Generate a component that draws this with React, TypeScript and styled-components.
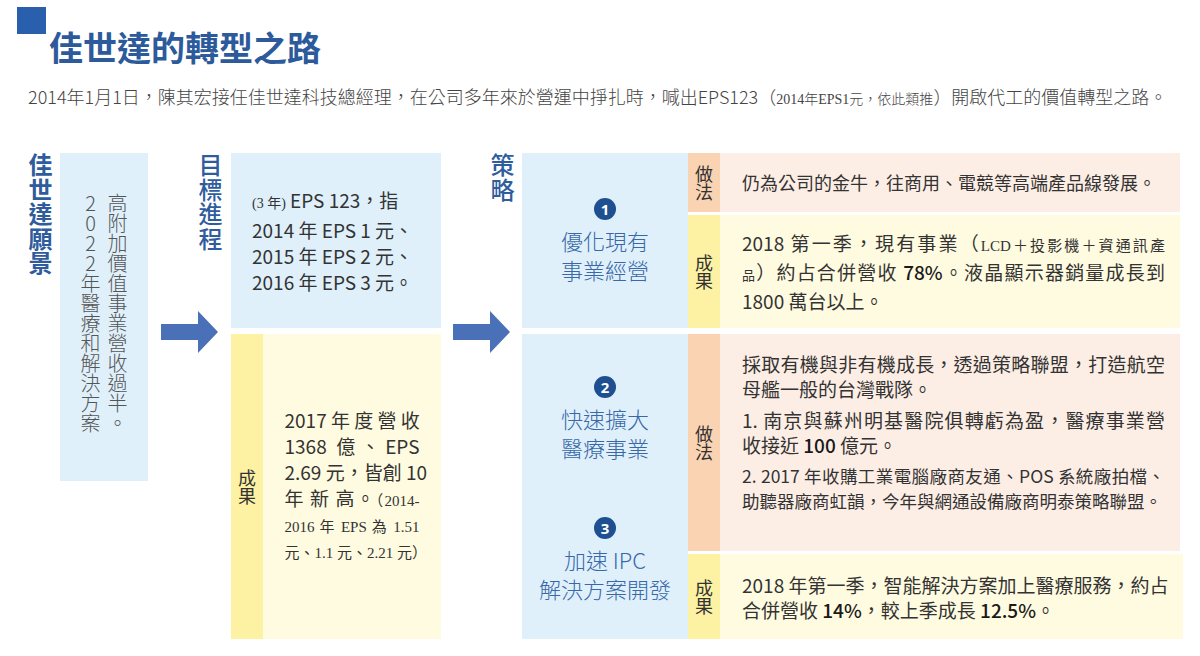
import React from 'react';
import styled, { createGlobalStyle } from 'styled-components';

const GlobalStyle = createGlobalStyle`
  html, body { margin: 0; padding: 0; background: #fff; }
  body { font-family: "Noto Sans CJK TC", "Noto Sans", sans-serif; color: #333; }
  * { box-sizing: border-box; }
`;

const C = {
  blueBox: '#dff0fb',
  peachStrip: '#fad3b3',
  peachBody: '#fdeee5',
  yellowStrip: '#fdf2a3',
  yellowBody: '#fffbe0',
  arrow: '#4a70b7',
  heading: '#2e5c9c',
  stratText: '#3868a8',
  dot: '#1d4f91',
};

const SERIF = `"Liberation Serif", "Noto Sans CJK TC", serif`;

const Page = styled.div`
  width: 1200px;
  height: 656px;
  overflow: hidden;
  background: #fff;
`;

const Header = styled.header`
  display: flex;
  align-items: flex-start;
  padding: 7px 0 0 17px;
`;

const Square = styled.div`
  flex: none;
  width: 29px;
  height: 27px;
  background: #2a5fae;
`;

const Title = styled.h1`
  margin: 20px 0 0 3px;
  font-size: 34px;
  line-height: 40px;
  font-weight: 700;
  color: #2c5a9b;
`;

const Subtitle = styled.p`
  margin: 16px 0 0 28px;
  font-size: 18px;
  line-height: 26px;
  font-weight: 300;
  color: #444;
  white-space: nowrap;
`;

const SmallSerif = styled.span<{ $size?: number }>`
  font-family: ${SERIF};
  font-size: ${(p) => p.$size ?? 13}px;
`;

const Main = styled.main`
  display: flex;
  margin-top: 40px;
  padding-left: 28px;
  width: 1180px;
  height: 486px;
`;

const VerticalHeading = styled.h2<{ $weight?: number }>`
  margin: 0;
  writing-mode: vertical-rl;
  font-size: 24px;
  line-height: 25px;
  font-weight: ${(p) => p.$weight ?? 500};
  color: ${C.heading};
  letter-spacing: 0.5px;
`;

const VisionHeading = styled(VerticalHeading)`
  margin-right: 7px;
  align-self: flex-start;
`;

const VisionBox = styled.div`
  width: 88px;
  height: 328px;
  background: ${C.blueBox};
  display: flex;
  justify-content: center;
  padding-top: 40px;
`;

const VisionText = styled.p`
  margin: 0;
  writing-mode: vertical-lr;
  text-orientation: upright;
  font-size: 20px;
  line-height: 27px;
  font-weight: 300;
  color: #555;
`;

const Gutter = styled.div<{ $width: number; $titleGap: number }>`
  flex: none;
  width: ${(p) => p.$width}px;
  display: grid;
  grid-template-rows: 158px 42px;
  & > h2 {
    justify-self: end;
    align-self: start;
    margin-right: ${(p) => p.$titleGap}px;
  }
`;

const ArrowIcon = styled.svg`
  grid-row: 2;
  justify-self: center;
  display: block;
`;

const Arrow = () => (
  <ArrowIcon width="57" height="42" viewBox="0 0 57 42">
    <polygon points="0,13 37,13 37,0 57,21 37,42 37,29 0,29" fill={C.arrow} />
  </ArrowIcon>
);

const Column = styled.div<{ $width?: number }>`
  display: flex;
  flex-direction: column;
  gap: 6px;
  ${(p) => (p.$width ? `width: ${p.$width}px; flex: none;` : 'flex: 1; min-width: 0;')}
`;

const GoalBox = styled.div`
  height: 175px;
  background: ${C.blueBox};
  display: flex;
  align-items: center;
  padding-left: 21px;
`;

const GoalText = styled.p`
  margin: 0;
  font-size: 19px;
  line-height: 26px;
  color: #333;
`;

const Panel = styled.div<{ $bg: string; $height?: number }>`
  display: flex;
  background: ${(p) => p.$bg};
  ${(p) => (p.$height ? `height: ${p.$height}px; flex: none;` : 'flex: 1;')}
`;

const Strip = styled.div<{ $bg: string }>`
  flex: none;
  width: 32px;
  background: ${(p) => p.$bg};
  display: flex;
  align-items: center;
  justify-content: center;
`;

const StripLabel = styled.span`
  writing-mode: vertical-rl;
  font-size: 18px;
  line-height: 18px;
  color: #333;
`;

const CenterBody = styled.div`
  flex: 1;
  display: flex;
  align-items: center;
  justify-content: center;
`;

const JustifyBlock = styled.div`
  width: 135px;
`;

const Line = styled.div<{ $justify?: boolean; $size?: number; $serif?: boolean }>`
  font-size: ${(p) => p.$size ?? 19}px;
  line-height: 25px;
  white-space: nowrap;
  ${(p) => (p.$serif ? `font-family: ${SERIF};` : '')}
  ${(p) =>
    p.$justify
      ? 'text-align: justify; text-align-last: justify;'
      : 'text-align: left;'}
`;

const ResultLine = styled(Line)`
  line-height: 26px;
`;

const StratRow = styled.div<{ $height?: number }>`
  display: flex;
  ${(p) => (p.$height ? `height: ${p.$height}px; flex: none;` : 'flex: 1;')}
`;

const StratCard = styled.div<{ $top?: number }>`
  flex: none;
  width: 166px;
  background: ${C.blueBox};
  display: flex;
  flex-direction: column;
  align-items: center;
  gap: 55px;
  ${(p) =>
    p.$top !== undefined
      ? `justify-content: flex-start; padding-top: ${p.$top}px;`
      : 'justify-content: center;'}
`;

const StratItem = styled.div`
  display: flex;
  flex-direction: column;
  align-items: center;
`;

const NumDot = styled.span`
  width: 22px;
  height: 22px;
  border-radius: 50%;
  background: ${C.dot};
  color: #fff;
  font-family: "Noto Sans", "Liberation Sans", sans-serif;
  font-weight: 700;
  font-size: 15px;
  line-height: 22px;
  text-align: center;
  margin-bottom: 6px;
`;

const StratName = styled.div`
  font-size: 22px;
  line-height: 29px;
  font-weight: 300;
  color: ${C.stratText};
  text-align: center;
  white-space: nowrap;
`;

const DetailStack = styled.div`
  flex: 1;
  min-width: 0;
  display: flex;
  flex-direction: column;
  gap: 3px;
`;

const DetailBody = styled.div<{ $bg: string; $padTop?: number }>`
  flex: 1;
  background: ${(p) => p.$bg};
  display: flex;
  flex-direction: column;
  gap: 6px;
  padding: 0 15px 0 22px;
  color: #333;
  ${(p) =>
    p.$padTop !== undefined
      ? `justify-content: flex-start; padding-top: ${p.$padTop}px;`
      : 'justify-content: center;'}
`;

const Para = styled.div``;

const Big = styled.span`
  color: #1a1a1a;
  font-weight: 500;
`;

const Detail = ({
  label,
  strip,
  body,
  height,
  padTop,
  children,
}: {
  label: string;
  strip: string;
  body: string;
  height?: number;
  padTop?: number;
  children: React.ReactNode;
}) => (
  <Panel $bg={body} $height={height}>
    <Strip $bg={strip}>
      <StripLabel>{label}</StripLabel>
    </Strip>
    <DetailBody $bg={body} $padTop={padTop}>
      {children}
    </DetailBody>
  </Panel>
);

export default function App() {
  return (
    <Page>
      <GlobalStyle />
      <Header>
        <Square />
        <Title>佳世達的轉型之路</Title>
      </Header>
      <Subtitle>
        2014年1月1日，陳其宏接任佳世達科技總經理，在公司多年來於營運中掙扎時，喊出EPS123（
        <SmallSerif $size={14}>2014年EPS1元，依此類推</SmallSerif>）開啟代工的價值轉型之路。
      </Subtitle>

      <Main>
        <VisionHeading $weight={700}>佳世達願景</VisionHeading>
        <VisionBox>
          <VisionText>
            2022年醫療和解決方案
            <br />
            高附加價值事業營收過半。
          </VisionText>
        </VisionBox>

        <Gutter $width={83} $titleGap={8}>
          <VerticalHeading>目標進程</VerticalHeading>
          <Arrow />
        </Gutter>

        <Column $width={210}>
          <GoalBox>
            <GoalText>
              <SmallSerif $size={14}>(3 年)</SmallSerif> EPS 123，指
              <br />
              2014 年 EPS 1 元、
              <br />
              2015 年 EPS 2 元、
              <br />
              2016 年 EPS 3 元。
            </GoalText>
          </GoalBox>
          <Panel $bg={C.yellowBody}>
            <Strip $bg={C.yellowStrip}>
              <StripLabel>成果</StripLabel>
            </Strip>
            <CenterBody>
              <JustifyBlock>
                <ResultLine $justify>2017 年 度 營 收</ResultLine>
                <ResultLine $justify>1368 億、EPS</ResultLine>
                <ResultLine $justify>2.69 元，皆創 10</ResultLine>
                <ResultLine $justify>
                  年 新 高。<SmallSerif $size={15}>（2014-</SmallSerif>
                </ResultLine>
                <ResultLine $justify $serif $size={15}>
                  2016 年 EPS 為 1.51
                </ResultLine>
                <ResultLine $justify $serif $size={15}>
                  元、1.1 元、2.21 元）
                </ResultLine>
              </JustifyBlock>
            </CenterBody>
          </Panel>
        </Column>

        <Gutter $width={81} $titleGap={7}>
          <VerticalHeading>策略</VerticalHeading>
          <Arrow />
        </Gutter>

        <Column>
          <StratRow $height={175}>
            <StratCard>
              <StratItem>
                <NumDot>1</NumDot>
                <StratName>
                  優化現有
                  <br />
                  事業經營
                </StratName>
              </StratItem>
            </StratCard>
            <DetailStack>
              <Detail label="做法" strip={C.peachStrip} body={C.peachBody} height={59}>
                <Line $size={18}>仍為公司的金牛，往商用、電競等高端產品線發展。</Line>
              </Detail>
              <Detail label="成果" strip={C.yellowStrip} body={C.yellowBody}>
                <Para>
                  <Line $justify>
                    2018 第一季，現有事業（<SmallSerif $size={15}>LCD＋投影機＋資通訊產</SmallSerif>
                  </Line>
                  <Line $justify>
                    <SmallSerif $size={13}>品</SmallSerif>）約占合併營收 <Big>78%</Big>。液晶顯示器銷量成長到
                  </Line>
                  <Line>1800 萬台以上。</Line>
                </Para>
              </Detail>
            </DetailStack>
          </StratRow>

          <StratRow>
            <StratCard $top={42}>
              <StratItem>
                <NumDot>2</NumDot>
                <StratName>
                  快速擴大
                  <br />
                  醫療事業
                </StratName>
              </StratItem>
              <StratItem>
                <NumDot>3</NumDot>
                <StratName>
                  加速 IPC
                  <br />
                  解決方案開發
                </StratName>
              </StratItem>
            </StratCard>
            <DetailStack>
              <Detail label="做法" strip={C.peachStrip} body={C.peachBody} height={217} padTop={17}>
                <Para>
                  <Line $justify>採取有機與非有機成長，透過策略聯盟，打造航空</Line>
                  <Line>母艦一般的台灣戰隊。</Line>
                </Para>
                <Para>
                  <Line $justify>1. 南京與蘇州明基醫院俱轉虧為盈，醫療事業營</Line>
                  <Line>
                    收接近 <Big>100</Big> 億元。
                  </Line>
                </Para>
                <Para>
                  <Line $justify $size={17.5}>
                    2. 2017 年收購工業電腦廠商友通、POS 系統廠拍檔、
                  </Line>
                  <Line $size={17.5}>助聽器廠商虹韻，今年與網通設備廠商明泰策略聯盟。</Line>
                </Para>
              </Detail>
              <Detail label="成果" strip={C.yellowStrip} body={C.yellowBody}>
                <Para>
                  <Line $justify>2018 年第一季，智能解決方案加上醫療服務，約占</Line>
                  <Line>
                    合併營收 <Big>14%</Big>，較上季成長 <Big>12.5%</Big>。
                  </Line>
                </Para>
              </Detail>
            </DetailStack>
          </StratRow>
        </Column>
      </Main>
    </Page>
  );
}
